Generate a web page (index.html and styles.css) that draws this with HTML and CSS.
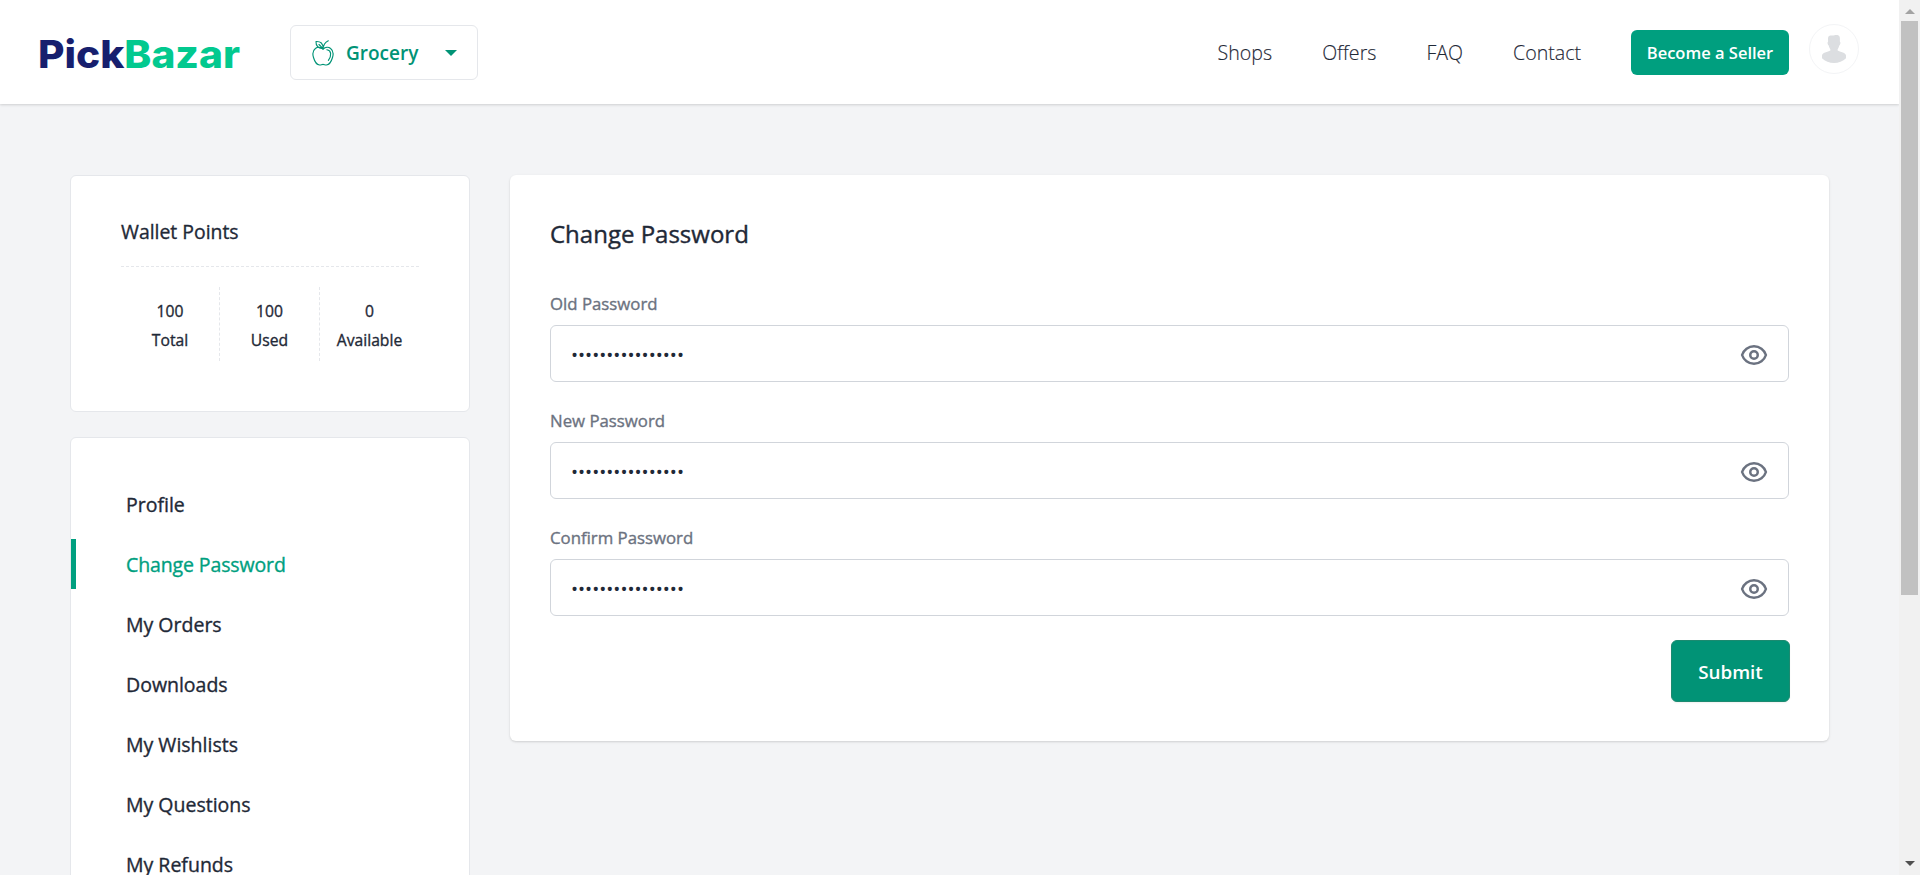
FILE: index.html
```html
<!DOCTYPE html>
<html lang="en">
<head>
<meta charset="utf-8">
<title>Change Password - PickBazar</title>
<link rel="stylesheet" href="styles.css">
</head>
<body>
<svg class="sprite" width="0" height="0" aria-hidden="true">
  <symbol id="eye" viewBox="0 0 24 24">
    <g fill="none" stroke="currentColor" stroke-width="2" stroke-linecap="round" stroke-linejoin="round">
      <path d="M15 12a3 3 0 11-6 0 3 3 0 016 0z"/>
      <path d="M2.458 12C3.732 7.943 7.523 5 12 5c4.478 0 8.268 2.943 9.542 7-1.274 4.057-5.064 7-9.542 7-4.477 0-8.268-2.943-9.542-7z"/>
    </g>
  </symbol>
</svg>
<div class="window">
  <div class="page">
    <header class="header">
      <a class="logo"><svg width="208" height="56" viewBox="-4 0 208 56"><text class="logo-text" y="43.500" x="-2" textLength="202" lengthAdjust="spacingAndGlyphs"><tspan class="logo-pick">Pick</tspan><tspan class="logo-bazar">Bazar</tspan></text></svg></a>
      <button class="group-menu">
        <svg class="apple" width="22" height="26" viewBox="0 0 22 26" fill="none" stroke="currentColor" stroke-width="1.15" stroke-linecap="round" stroke-linejoin="round">
          <path d="M11 9C8.800 7.200 5.500 6.800 3.400 8.500C.9 10.400.4 14 1.500 17.500C2.500 21 4.900 24.800 7.600 25C9 25.100 9.700 24.400 11 24.400C12.300 24.400 13 25.100 14.400 25C17.100 24.800 19.500 21 20.500 17.500C21.600 14 21.100 10.400 18.600 8.500C16.500 6.800 13.200 7.200 11 9Z"/>
          <path d="M11 9.300C11.200 6.200 12.800 2.500 16.300.8M10.800 8.400C6.300 8.700 3.800 5.900 4 1.500C8.500 1.200 11.500 3.600 10.800 8.400ZM10.800 8.400L7 4.500M15 9.700C19.300 10.200 19.900 15.400 16.400 20.300"/>
        </svg>
        <span class="group-name">Grocery</span>
        <span class="caret"></span>
      </button>
      <nav class="nav">
        <a>Shops</a><a>Offers</a><a>FAQ</a><a>Contact</a>
      </nav>
      <button class="seller">Become a Seller</button>
      <span class="avatar"><svg width="48" height="48" viewBox="0 0 48 48"><path fill="#dcdee1" d="M18.500 11.500C20 9.700 22 11 24.500 10.300C26.500 9.800 28.500 10 29.500 11.500C30.200 13 29.800 15 29.900 16.500C31 17.500 30.300 19.700 29.300 20.500C28.900 23 27.500 24 27.500 25.300C28.500 27 36 27.300 36 30.500V33.200C30 39.500 18 39.500 12 33.200V30.500C12 27.300 19.500 27 20.500 25.300C20.500 24 19.100 23 18.700 20.500C17.700 19.700 17 17.500 18.100 16.500C18.200 15 17.600 13 18.500 11.500Z"/></svg></span>
    </header>
    <div class="content">
      <aside class="sidebar">
        <section class="card wallet">
          <h3 class="wallet-title">Wallet Points</h3>
          <div class="stats">
            <div class="stat"><span>100</span><span>Total</span></div>
            <div class="stat"><span>100</span><span>Used</span></div>
            <div class="stat"><span>0</span><span>Available</span></div>
          </div>
        </section>
        <ul class="card menu">
          <li class="item">Profile</li>
          <li class="item active">Change Password</li>
          <li class="item">My Orders</li>
          <li class="item">Downloads</li>
          <li class="item">My Wishlists</li>
          <li class="item">My Questions</li>
          <li class="item">My Refunds</li>
        </ul>
      </aside>
      <main class="panel">
        <h1 class="title">Change Password</h1>
        <div class="field">
          <label class="label">Old Password</label>
          <div class="box"><span class="dots">••••••••••••••••</span><svg class="eye" width="30" height="30"><use href="#eye"/></svg></div>
        </div>
        <div class="field">
          <label class="label">New Password</label>
          <div class="box"><span class="dots">••••••••••••••••</span><svg class="eye" width="30" height="30"><use href="#eye"/></svg></div>
        </div>
        <div class="field">
          <label class="label">Confirm Password</label>
          <div class="box"><span class="dots">••••••••••••••••</span><svg class="eye" width="30" height="30"><use href="#eye"/></svg></div>
        </div>
        <div class="actions"><button class="submit">Submit</button></div>
      </main>
    </div>
  </div>
  <div class="scrollbar">
    <span class="arrow up"></span>
    <span class="thumb"></span>
    <span class="arrow down"></span>
  </div>
</div>
</body>
</html>
```
FILE: styles.css
```css
* { box-sizing: border-box; }
body { margin: 0; font-family: "Open Sans", "Noto Sans", sans-serif; color: #1f2937; overflow: hidden; }
h1, h3, ul { margin: 0; padding: 0; }
ul { list-style: none; }
button { font-family: inherit; cursor: pointer; }
svg { display: block; }
.sprite { position: absolute; }
.window { display: flex; height: 875px; overflow: hidden; }
.page { width: 1899px; height: 875px; overflow: hidden; background: #f3f4f6; }

.header { display: flex; align-items: center; height: 104px; padding: 0 40px 0 36px; background: #fff; box-shadow: 0 1px 3px rgba(0,0,0,.1), 0 1px 2px rgba(0,0,0,.06); }
.logo { width: 208px; margin-right: 46px; }
.logo-text { font: 800 38px Inter, sans-serif; }
.logo-pick { fill: #171f6e; }
.logo-bazar { fill: #02c98f; }
.group-menu { display: flex; align-items: center; width: 188px; height: 55px; margin-top: 1px; padding: 0 20px 0 21px; border: 1px solid #e5e7eb; border-radius: 6px; background: #fff; color: #019376; }
.group-name { margin-left: 12px; font-size: 19px; font-weight: 600; line-height: 28px; }
.caret { margin-left: auto; border: 6px solid transparent; border-top-color: #019376; border-bottom: 0; }
.nav { display: flex; gap: 50px; margin-top: 2px; margin-left: auto; margin-right: 50px; font-size: 19.600px; font-weight: 300; line-height: 30px; color: #1f2937; -webkit-text-stroke: .15px; }
.seller { width: 158px; height: 45px; margin-top: 1px; margin-right: 20px; padding: 0; border: 0; border-radius: 6px; background: #009f7f; color: #fff; font-size: 16.500px; font-weight: 600; white-space: nowrap; }
.avatar { width: 50px; height: 50px; margin-top: -6px; border: 1px solid #f3f4f6; border-radius: 50%; }

.content { display: flex; align-items: flex-start; gap: 40px; padding: 71px 70px 0; }
.sidebar { width: 400px; flex: none; -webkit-text-stroke: .35px; }
.card { border: 1px solid #e5e7eb; border-radius: 6px; background: #fff; }
.wallet { height: 237px; padding: 38px 50px 0; }
.wallet-title { height: 53px; border-bottom: 1px dashed #e5e7eb; font-size: 19.400px; font-weight: 500; line-height: 36px; }
.stats { display: grid; grid-template-columns: 98px 100px 100px; margin-top: 20px; }
.stat { display: flex; flex-direction: column; height: 74px; padding-top: 10px; text-align: center; font-size: 15.700px; font-weight: 500; line-height: 29px; }
.stat + .stat { border-left: 1px dashed #e5e7eb; }
.menu { height: 600px; margin-top: 25px; padding-top: 41px; }
.item { display: flex; align-items: center; height: 50px; margin-bottom: 10px; padding-left: 50px; border-left: 5px solid transparent; font-size: 19.5px; font-weight: 500; }
.item.active { border-color: #009f7f; color: #009f7f; letter-spacing: -.12px; }

.panel { width: 1319px; height: 566px; padding: 40px; border-radius: 6px; background: #fff; box-shadow: 0 1px 3px rgba(0,0,0,.1), 0 1px 2px rgba(0,0,0,.06); }
.title { height: 70px; font-size: 24px; font-weight: 500; line-height: 38px; -webkit-text-stroke: .4px; }
.field { height: 117px; }
.label { display: block; height: 40px; font-size: 16.800px; font-weight: 500; line-height: 38px; color: #6b7280; -webkit-text-stroke: .35px; }
.box { display: flex; align-items: center; justify-content: space-between; height: 57px; padding: 2px 19px 0 20px; border: 1px solid #d1d5db; border-radius: 6px; }
.dots { font-size: 18.800px; }
.eye { color: #6b7280; }
.actions { display: flex; justify-content: flex-end; margin-top: 4px; margin-right: -1px; }
.submit { width: 119px; height: 62px; padding: 2px 0 0; border: 1px solid #1c8a70; border-radius: 6px; background: #019376; color: #fff; font-size: 18.800px; font-weight: 600; box-shadow: 0 1px 2px rgba(0,0,0,.06); }

.scrollbar { display: flex; flex-direction: column; align-items: center; width: 21px; background: #f1f1f1; }
.arrow { border: 5px solid transparent; }
.up { margin-top: 9px; border-top: 0; border-bottom-color: #a3a3a3; }
.thumb { width: 17px; height: 574px; margin-top: 7px; background: #c1c1c1; }
.down { margin-top: auto; margin-bottom: 9px; border-bottom: 0; border-top-color: #505050; }
```
